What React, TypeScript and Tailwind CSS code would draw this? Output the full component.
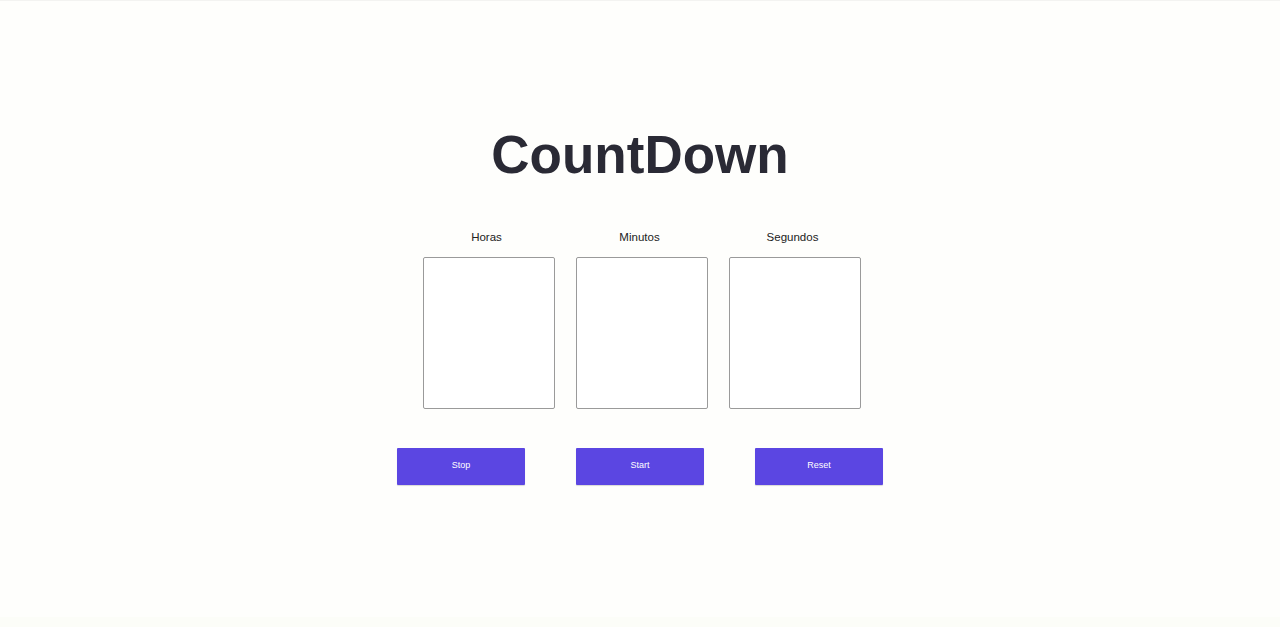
import React from "react";

export default function App() {
  const fields = ["Horas", "Minutos", "Segundos"];
  const buttons = ["Stop", "Start", "Reset"];

  return (
    <main className="w-full h-[627px] bg-[#fefefc] border-t border-[#f3f3f1] font-['Liberation_Sans',Arial,sans-serif] flex flex-col items-center">
      <h1 className="mt-[119px] text-[53px] leading-[70px] font-bold text-[#2a2a35]">
        CountDown
      </h1>

      <section className="mt-[40px] ml-[4px] flex gap-[21px]">
        {fields.map((f) => (
          <div key={f} className="flex flex-col items-center">
            <label className="pr-[5px] text-[11.5px] leading-[14px] text-[#222]">{f}</label>
            <input
              type="text"
              className="mt-[13px] w-[132px] h-[152px] border border-[#9a9a9a] rounded-[2px] bg-white"
            />
          </div>
        ))}
      </section>

      <section className="mt-[39px] flex gap-[51px]">
        {buttons.map((b) => (
          <button
            key={b}
            className="w-[128px] h-[37px] pb-[2px] bg-[#5b46e2] text-white text-[9px] rounded-[1px] shadow-[0_1px_1px_rgba(0,0,0,0.15)]"
          >
            {b}
          </button>
        ))}
      </section>

      <div className="mt-auto w-full h-[10px] bg-[#fcfdf8]" />
    </main>
  );
}
